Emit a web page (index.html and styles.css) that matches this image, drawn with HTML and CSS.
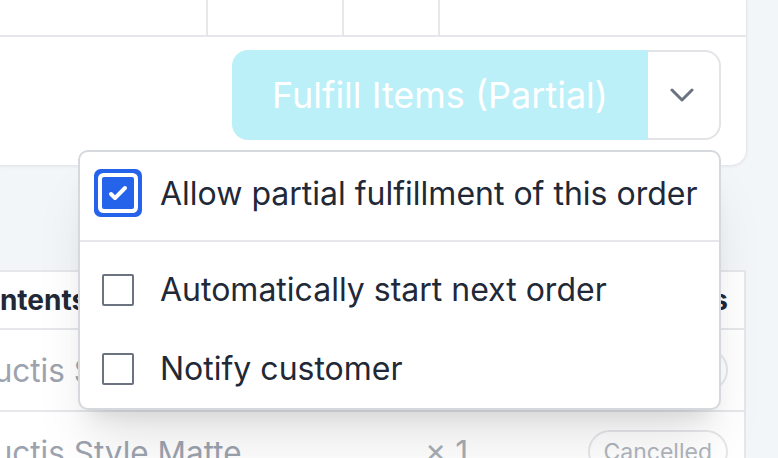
FILE: index.html
```html
<!DOCTYPE html>
<html lang="en">
<head>
<meta charset="utf-8">
<title>Fulfill Items</title>
<link rel="stylesheet" href="styles.css">
</head>
<body>
<div class="screen">
  <section class="top-card">
    <div class="grid-row">
      <div class="cell"></div>
      <div class="cell"></div>
      <div class="cell"></div>
      <div class="cell"></div>
    </div>
    <div class="actions">
      <div class="split">
        <button class="primary" type="button">Fulfill Items (Partial)</button>
        <button class="toggle" type="button" aria-label="More options">
          <svg width="24" height="14" viewBox="0 0 24 14" aria-hidden="true"><path d="M2 2 L12 12 L22 2" fill="none" stroke="#6b7280" stroke-width="3" stroke-linecap="round" stroke-linejoin="round"/></svg>
        </button>
      </div>
    </div>
  </section>

  <section class="table-card">
    <div class="trow thead">
      <div class="col-name head-name">Contents</div>
      <div class="col-qty"></div>
      <div class="col-status">Status</div>
    </div>
    <div class="trow">
      <div class="col-name row-name">Productis Style Matte</div>
      <div class="col-qty">× 1</div>
      <div class="col-status"><span class="pill">Cancelled</span></div>
    </div>
    <div class="trow">
      <div class="col-name row-name">Productis Style Matte</div>
      <div class="col-qty">× 1</div>
      <div class="col-status"><span class="pill">Cancelled</span></div>
    </div>
  </section>

  <div class="menu">
    <div class="menu-section first">
      <label class="item">
        <span class="box checked">
          <svg width="32" height="32" viewBox="0 0 16 16" aria-hidden="true"><path fill="#fff" d="M12.207 4.793a1 1 0 010 1.414l-5 5a1 1 0 01-1.414 0l-2-2a1 1 0 011.414-1.414L6.5 9.086l4.293-4.293a1 1 0 011.414 0z"/></svg>
        </span>
        <span class="label">Allow partial fulfillment of this order</span>
      </label>
    </div>
    <div class="menu-section second">
      <label class="item">
        <span class="box"></span>
        <span class="label">Automatically start next order</span>
      </label>
      <label class="item">
        <span class="box"></span>
        <span class="label">Notify customer</span>
      </label>
    </div>
  </div>
</div>
</body>
</html>
```

FILE: styles.css
```css
* { box-sizing: border-box; }
html, body { margin: 0; padding: 0; }
body {
  width: 778px;
  height: 458px;
  overflow: hidden;
  background: #f3f6f9;
  font-family: Inter, "Noto Sans", sans-serif;
  color: #1f2937;
}
.screen {
  position: relative;
  width: 778px;
  height: 458px;
  overflow: hidden;
}

/* top card */
.top-card {
  width: 747px;
  height: 166px;
  background: #fff;
  border-right: 1px solid #e5e7eb;
  border-bottom: 1px solid #e5e7eb;
  border-bottom-right-radius: 16px;
  box-shadow: 0 1px 3px rgba(15, 23, 42, 0.06);
}
.grid-row {
  display: grid;
  grid-template-columns: 208px 136px 96px 1fr;
  height: 37px;
  border-bottom: 2px solid #e5e7eb;
}
.cell { border-right: 2px solid #e5e7eb; }
.cell:last-child { border-right: 0; }
.actions {
  display: flex;
  justify-content: flex-end;
  padding-top: 13px;
  padding-right: 25px;
}
.split {
  display: flex;
  height: 90px;
}
.primary {
  width: 416px;
  height: 90px;
  background: #bbf0f8;
  color: #fff;
  border: 0;
  border-radius: 16px 0 0 16px;
  font-family: Inter, "Noto Sans", sans-serif;
  font-size: 36px;
  font-weight: 400;
  padding: 0;
}
.toggle {
  width: 73px;
  height: 90px;
  background: #fff;
  border: 2px solid #e2e4e8;
  border-left: 0;
  border-radius: 0 16px 16px 0;
  display: flex;
  align-items: center;
  justify-content: center;
  padding: 0 4px 0 0;
}

/* table card */
.table-card {
  margin-top: 104px;
  width: 746px;
  background: #fff;
  border-top: 2px solid #e5e7eb;
  border-right: 2px solid #e5e7eb;
}
.trow {
  display: grid;
  grid-template-columns: 425px 150px 1fr;
  align-items: center;
  height: 82px;
  border-bottom: 2px solid #e5e7eb;
  font-size: 31.5px;
  color: #9ca3af;
}
.thead {
  height: 58px;
  font-size: 28px;
  font-weight: 700;
  color: #1f2937;
}
.col-name { white-space: nowrap; }
.head-name { text-indent: -38px; }
.row-name { text-indent: -76px; }
.col-qty { color: #a8adb5; font-size: 32px; }
.col-status {
  display: flex;
  justify-content: flex-end;
  padding-right: 16px;
}
.pill {
  display: inline-flex;
  align-items: center;
  height: 44px;
  padding: 0 14px;
  border: 2px solid #e5e7eb;
  border-radius: 22px;
  font-size: 23px;
  font-weight: 400;
  color: #b0b5bd;
}

/* dropdown menu (overlay) */
.menu {
  position: absolute;
  left: 78px;
  top: 150px;
  width: 643px;
  height: 260px;
  background: #fff;
  border: 2px solid #d5d8dd;
  border-radius: 10px;
  box-shadow: 0 40px 50px -10px rgba(0, 0, 0, 0.10), 0 16px 20px -12px rgba(0, 0, 0, 0.10);
}
.menu-section.first {
  height: 90px;
  padding-bottom: 6px;
  display: flex;
  align-items: center;
  border-bottom: 2px solid #e5e7eb;
}
.menu-section.second {
  padding-top: 8px;
}
.menu-section.second .item { height: 79px; }
.item {
  display: flex;
  align-items: center;
  gap: 26px;
  padding-left: 22px;
  font-size: 32px;
  color: #1f2937;
}
.box {
  flex: none;
  width: 32px;
  height: 32px;
  border: 2px solid #6b7280;
  border-radius: 2px;
  background: #fff;
  display: flex;
  align-items: center;
  justify-content: center;
}
.box.checked {
  background: #2563eb;
  border-color: #2563eb;
  box-shadow: 0 0 0 4px #fff, 0 0 0 8px #2563eb;
}
.box.checked svg { flex: none; }
```
